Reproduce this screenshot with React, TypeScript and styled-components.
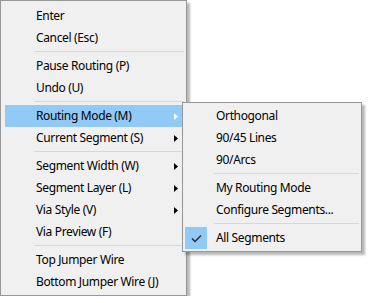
import {FC} from "react";
import styled, {createGlobalStyle} from "styled-components";

const GlobalStyle = createGlobalStyle`
  html, body {
    margin: 0;
    padding: 0;
    background: #ffffff;
  }

  body {
    font-family: "Noto Sans", "Open Sans", sans-serif;
    font-size: 12px;
    letter-spacing: -0.35px;
    color: #000000;
  }
`;

const StyledMenu = styled.div<{ $sub?: boolean }>`
  position: ${p => p.$sub ? "absolute" : "relative"};
  left: ${p => p.$sub ? "181px" : "auto"};
  top: ${p => p.$sub ? "101px" : "auto"};
  z-index: ${p => p.$sub ? 2 : 1};
  box-sizing: border-box;
  width: ${p => p.$sub ? "180px" : "187px"};
  padding: ${p => p.$sub ? "2px 0" : "4px 0 2px"};
  background-color: #f0f0f0;
  border: 1px solid #979797;
  box-shadow: 3px 3px 2px rgba(0, 0, 0, 0.28);
`;

const StyledItem = styled.div<{ $active?: boolean; $inset: number }>`
  position: relative;
  display: flex;
  align-items: center;
  justify-content: space-between;
  height: 22px;
  margin: 0 2px 0 ${p => p.$inset}px;
  padding: 0 6px 0 31px;
  line-height: 22px;
  white-space: nowrap;
  background-color: ${p => p.$active ? "#91c9f7" : "transparent"};
`;

const StyledSeparator = styled.div<{ $inset: number }>`
  height: 1px;
  margin: 2px 2px 3px ${p => p.$inset + 29}px;
  background-color: #d7d7d7;
`;

const StyledCheck = styled.span`
  position: absolute;
  left: 0;
  top: 0;
  display: flex;
  align-items: center;
  justify-content: center;
  width: 22px;
  height: 22px;
  background-color: #91c9f7;
`;

type entry = { label?: string; sub?: boolean; active?: boolean; checked?: boolean };

const mainItems: entry[] = [
    {label: "Enter"},
    {label: "Cancel (Esc)"},
    {},
    {label: "Pause Routing (P)"},
    {label: "Undo (U)"},
    {},
    {label: "Routing Mode (M)", sub: true, active: true},
    {label: "Current Segment (S)", sub: true},
    {},
    {label: "Segment Width (W)", sub: true},
    {label: "Segment Layer (L)", sub: true},
    {label: "Via Style (V)", sub: true},
    {label: "Via Preview (F)"},
    {},
    {label: "Top Jumper Wire"},
    {label: "Bottom Jumper Wire (J)"},
];

const subItems: entry[] = [
    {label: "Orthogonal"},
    {label: "90/45 Lines"},
    {label: "90/Arcs"},
    {},
    {label: "My Routing Mode"},
    {label: "Configure Segments..."},
    {},
    {label: "All Segments", checked: true},
];

const Arrow: FC<{ light?: boolean }> = ({light}) => (
    <svg width="4" height="7" viewBox="0 0 4 7">
        <path d="M0 0 L4 3.5 L0 7 Z" fill={light ? "#ffffff" : "#000000"}/>
    </svg>
);

const CheckMark: FC = () => (
    <svg width="11" height="9" viewBox="0 0 11 9">
        <path d="M1 4.5 L4 7.5 L10 1.5" fill="none" stroke="#2b2b2b" strokeWidth="1.4"/>
    </svg>
);

const MenuList: FC<{ items: entry[]; inset: number }> = ({items, inset}) => (
    <>
        {items.map((item, i) => item.label ? (
            <StyledItem key={i} $active={item.active} $inset={inset}>
                {item.checked && <StyledCheck><CheckMark/></StyledCheck>}
                <span>{item.label}</span>
                {item.sub && <Arrow light={item.active}/>}
            </StyledItem>
        ) : (
            <StyledSeparator key={i} $inset={inset}/>
        ))}
    </>
);

const App: FC = () => {
    return (
        <>
            <GlobalStyle/>
            <StyledMenu>
                <MenuList items={mainItems} inset={4}/>
                <StyledMenu $sub>
                    <MenuList items={subItems} inset={2}/>
                </StyledMenu>
            </StyledMenu>
        </>
    );
};

export default App;
